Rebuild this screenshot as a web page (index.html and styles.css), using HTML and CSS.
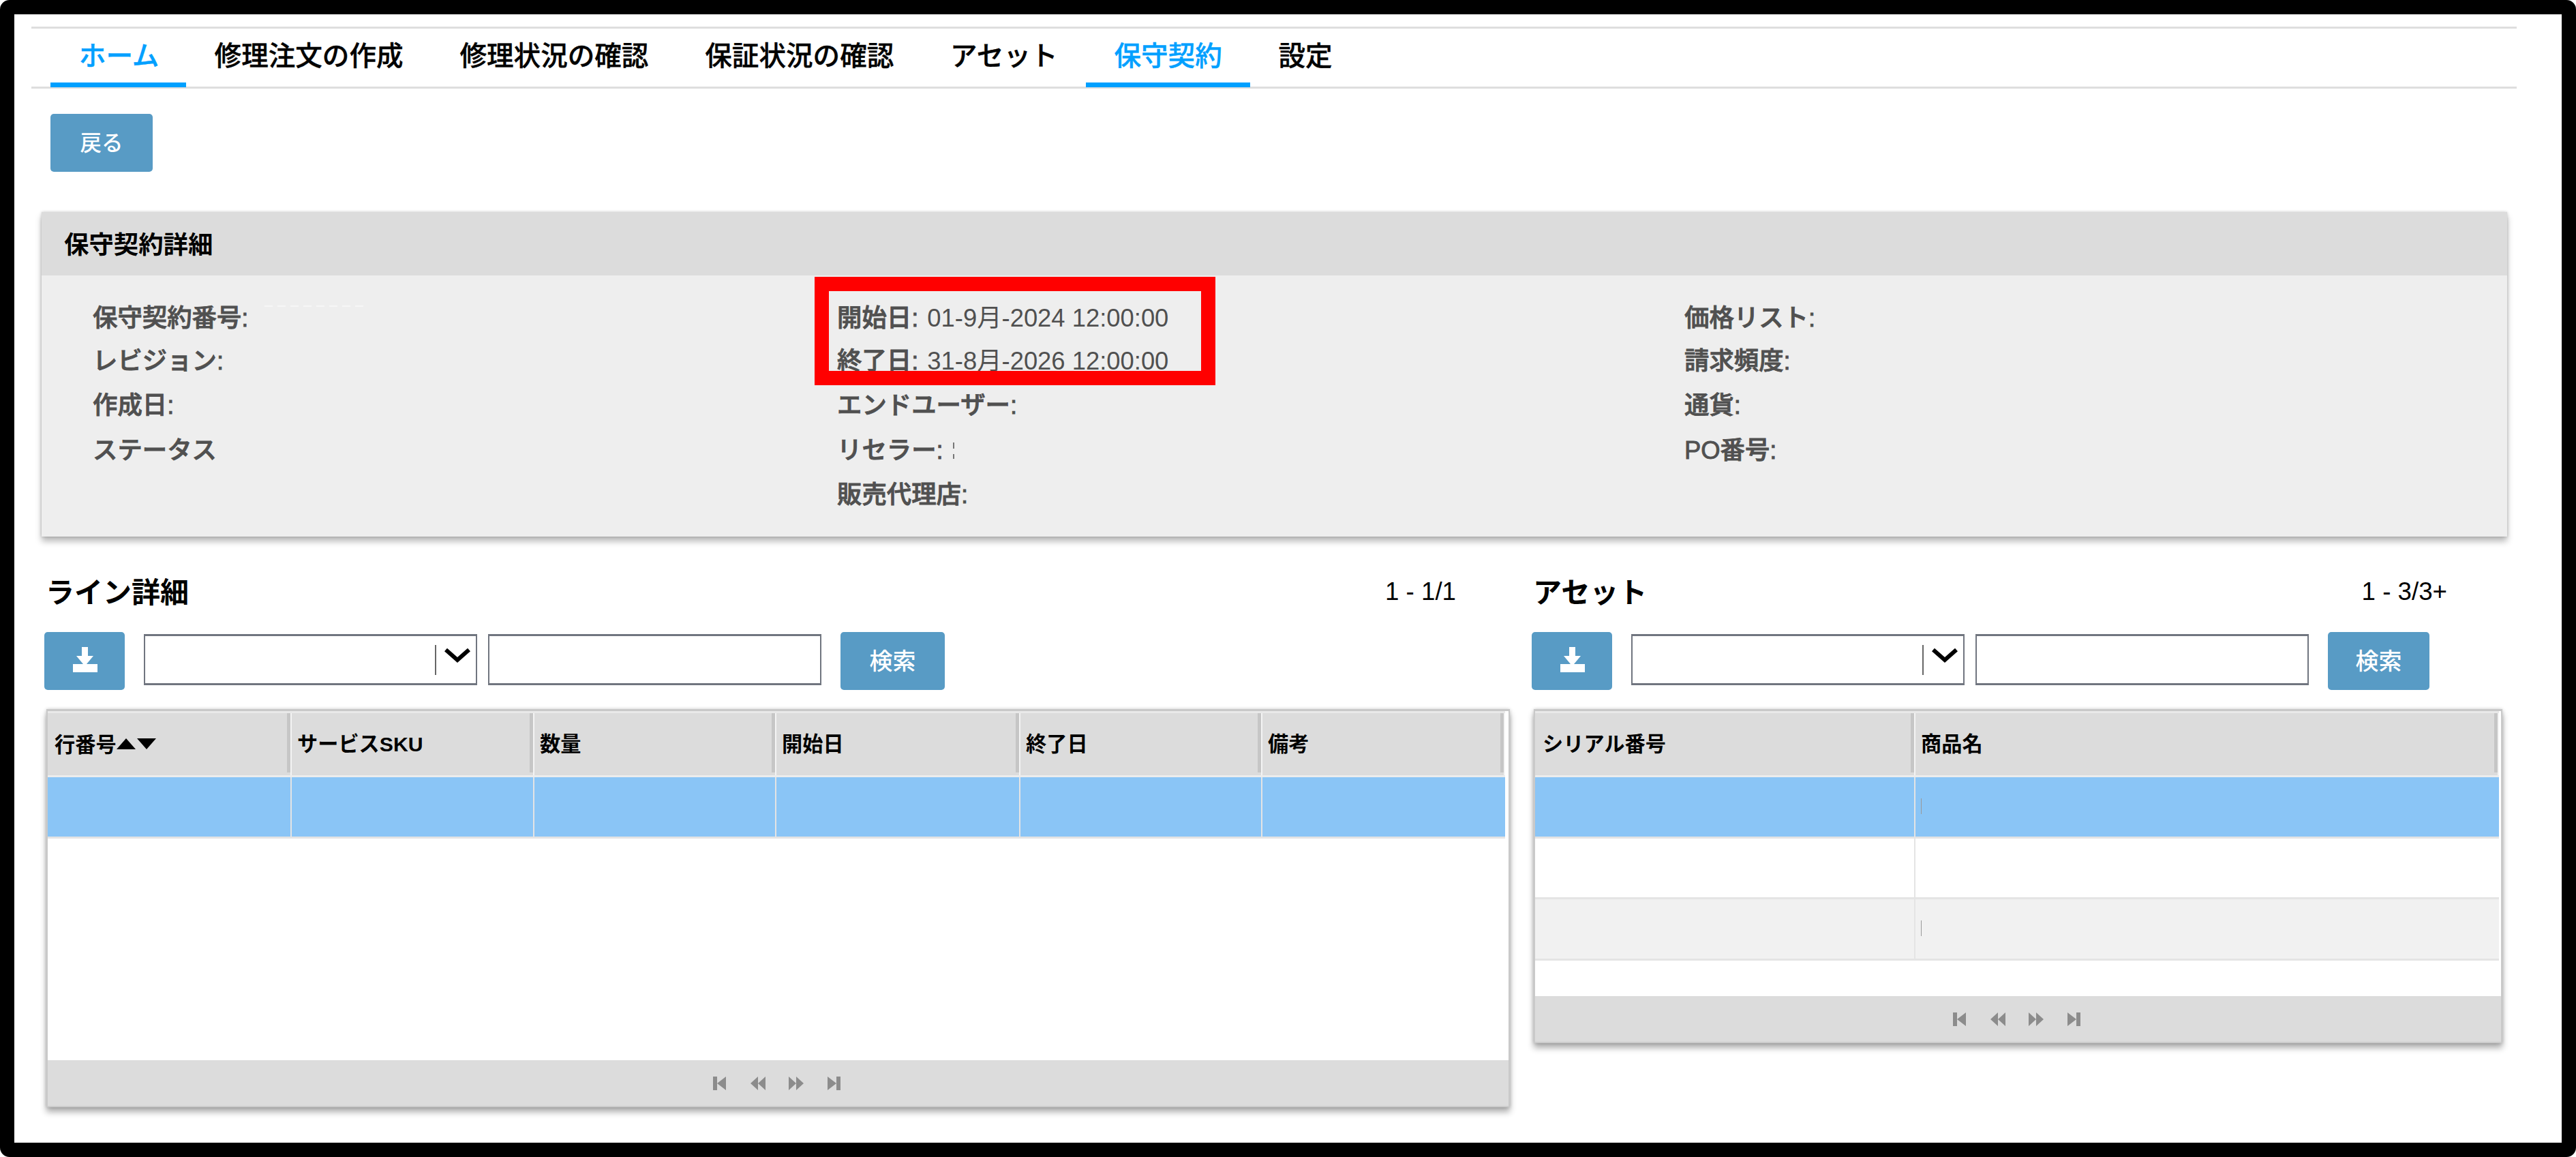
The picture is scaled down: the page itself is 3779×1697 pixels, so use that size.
FILE: index.html
```html
<!DOCTYPE html>
<html lang="ja">
<head>
<meta charset="utf-8">
<title>保守契約詳細</title>
<link rel="stylesheet" href="styles.css">
</head>
<body>
<svg class="defs" width="0" height="0">
  <symbol id="download" viewBox="0 0 38 38"><path d="M14 0h9v13h8L21 25h16v12H1V25h15L6 13h8z"/></symbol>
  <symbol id="first" viewBox="0 0 22 20"><path d="M1 0h6v20H1zM20 0v20L7 10z"/></symbol>
  <symbol id="prev" viewBox="0 0 22 20"><path d="M11 0v20L0 10zM22 0v20L11 10z"/></symbol>
  <symbol id="next" viewBox="0 0 22 20"><path d="M0 0l11 10L0 20zM11 0l11 10-11 10z"/></symbol>
  <symbol id="last" viewBox="0 0 22 20"><path d="M1 0l13 10L1 20zM14 0h6v20h-6z"/></symbol>
</svg>
<div class="frame">
  <nav class="tabs">
    <a class="tab tab-home active">ホーム</a>
    <a class="tab">修理注文の作成</a>
    <a class="tab">修理状況の確認</a>
    <a class="tab">保証状況の確認</a>
    <a class="tab">アセット</a>
    <a class="tab active">保守契約</a>
    <a class="tab">設定</a>
  </nav>
  <button class="btn back">戻る</button>

  <section class="panel">
    <h2 class="panel-title">保守契約詳細</h2>
    <div class="panel-body">
      <div class="col">
        <div class="field"><b>保守契約番号:</b><i class="erased"></i></div>
        <div class="field"><b>レビジョン:</b></div>
        <div class="field"><b>作成日:</b></div>
        <div class="field"><b>ステータス</b></div>
      </div>
      <div class="col">
        <div class="field"><b>開始日:</b><span>01-9月-2024 12:00:00</span></div>
        <div class="field"><b>終了日:</b><span>31-8月-2026 12:00:00</span></div>
        <div class="field"><b>エンドユーザー:</b></div>
        <div class="field"><b>リセラー:</b><i class="remnant"></i></div>
        <div class="field"><b>販売代理店:</b></div>
        <div class="highlight"></div>
      </div>
      <div class="col">
        <div class="field"><b>価格リスト:</b></div>
        <div class="field"><b>請求頻度:</b></div>
        <div class="field"><b>通貨:</b></div>
        <div class="field"><b>PO番号:</b></div>
      </div>
    </div>
  </section>

  <div class="lists">
    <section class="list lines">
      <div class="list-head"><h3>ライン詳細</h3><span class="count">1 - 1/1</span></div>
      <div class="toolbar">
        <button class="btn download"><svg><use href="#download"/></svg></button>
        <div class="select"><i class="bar"></i><svg class="chev" viewBox="0 0 40 22"><path d="M3 2l17 15L37 2"/></svg></div>
        <div class="input"></div>
        <button class="btn search">検索</button>
      </div>
      <div class="table">
        <div class="row head">
          <div class="th sorted">行番号<svg class="sort" viewBox="0 0 60 20"><path d="M1 18L15 2l14 16zM31 2h28L45 18z"/></svg></div><div class="th">サービスSKU</div><div class="th">数量</div><div class="th">開始日</div><div class="th">終了日</div><div class="th">備考</div>
        </div>
        <div class="row selected"><div></div><div></div><div></div><div></div><div></div><div></div></div>
        <div class="blank"></div>
        <div class="pager"><svg><use href="#first"/></svg><svg><use href="#prev"/></svg><svg><use href="#next"/></svg><svg><use href="#last"/></svg></div>
      </div>
    </section>
    <section class="list assets">
      <div class="list-head"><h3>アセット</h3><span class="count">1 - 3/3+</span></div>
      <div class="toolbar">
        <button class="btn download"><svg><use href="#download"/></svg></button>
        <div class="select"><i class="bar"></i><svg class="chev" viewBox="0 0 40 22"><path d="M3 2l17 15L37 2"/></svg></div>
        <div class="input"></div>
        <button class="btn search">検索</button>
      </div>
      <div class="table">
        <div class="row head"><div class="th">シリアル番号</div><div class="th">商品名</div></div>
        <div class="row selected"><div></div><div class="mark"></div></div>
        <div class="row"><div></div><div></div></div>
        <div class="row odd"><div></div><div class="mark"></div></div>
        <div class="blank"></div>
        <div class="pager"><svg><use href="#first"/></svg><svg><use href="#prev"/></svg><svg><use href="#next"/></svg><svg><use href="#last"/></svg></div>
      </div>
    </section>
  </div>
</div>
</body>
</html>
```

FILE: styles.css
```css
* { box-sizing: border-box; }
body {
  margin: 0;
  background: #fff;
  color: #000;
  font-family: "Liberation Sans", "Noto Sans CJK JP", sans-serif;
}
.defs { position: absolute; }
h2, h3 { margin: 0; }
.frame {
  width: 3779px;
  height: 1697px;
  border: 21px solid #000;
  border-radius: 14px;
  padding: 18px 0 0 25px;
  overflow: hidden;
}

/* navigation */
.tabs {
  display: flex;
  width: 3646px;
  height: 91px;
  padding-left: 28px;
  border-top: 3px solid #dedede;
  border-bottom: 3px solid #dedede;
}
.tab {
  height: 86px;
  padding: 0 41.4px;
  font-size: 39.6px;
  font-weight: 500;
  line-height: 80px;
  white-space: nowrap;
  -webkit-text-stroke: .4px currentColor;
}
.tab-home { padding: 0 39.8px 0 41.8px; }
.tab.active {
  height: 86px;
  border-bottom: 7px solid #00a0ff;
  color: #00a0ff;
}

.btn {
  display: flex;
  align-items: center;
  justify-content: center;
  flex: none;
  height: 85px;
  padding: 0 0 5px;
  border: 0;
  border-radius: 5px;
  background: #589bc5;
  color: #fff;
  font: 500 34px "Liberation Sans", "Noto Sans CJK JP", sans-serif;
}
.back { width: 150px; margin: 37px 0 0 28px; font-size: 31.5px; }

/* contract details */
.panel {
  width: 3617px;
  height: 476px;
  margin: 59px 0 0 15px;
  background: #eee;
  box-shadow: 0 7px 9px rgba(0, 0, 0, .28), 0 0 4px rgba(0, 0, 0, .2);
}
.panel-title {
  height: 93px;
  padding-left: 33px;
  background: #dcdcdc;
  font-size: 36.4px;
  font-weight: 700;
  line-height: 98px;
}
.panel-body {
  display: grid;
  grid-template-columns: 1092px 1243px 1fr;
  padding: 30px 0 0 75px;
}
.col { position: relative; }
.field {
  display: flex;
  height: 65.3px;
  color: #505050;
  font-size: 36.4px;
  line-height: 65px;
  white-space: nowrap;
}
.field:first-child { height: 63px; }
.field b { font-weight: 500; -webkit-text-stroke: .9px currentColor; }
.field span { margin-left: 13px; }
.remnant {
  width: 2px;
  height: 24px;
  margin: 21px 0 0 14px;
  background: linear-gradient(#777 0 9px, transparent 9px 17px, #777 17px);
}
.erased {
  width: 147px;
  height: 2px;
  margin: 14px 0 0 24px;
  background: repeating-linear-gradient(90deg, #f6f6f6 0 12px, transparent 12px 19px);
}
.highlight {
  position: absolute;
  left: -33px;
  top: -28px;
  width: 588px;
  height: 159px;
  border: 21px solid #f00;
}

/* lists */
.lists { display: flex; align-items: flex-start; padding: 47px 0 0 19px; }
.lines { width: 2182px; }
.assets { width: 1424px; }
.list-head {
  display: flex;
  justify-content: space-between;
  height: 93px;
  padding-left: 2px;
  line-height: 68px;
}
.list-head h3 { font-size: 42px; font-weight: 700; line-height: 72px; }
.count { font-size: 36.7px; }
.lines .count { margin-right: 111px; }
.assets .count { margin-right: 81px; }
.toolbar { display: flex; }
.download { width: 118px; margin-right: 28px; padding: 0 0 3px 2px; }
.download svg { width: 38px; height: 38px; fill: #fff; }
.select, .input {
  flex: none;
  width: 489px;
  height: 75px;
  margin-top: 3px;
  border: 2px solid #70757f;
  border-width: 3px 2px;
  background: #fff;
}
.select {
  display: flex;
  justify-content: flex-end;
  margin-right: 16px;
  padding: 13px 7px 0 0;
}
.bar { width: 2px; height: 44px; margin-right: 11px; background: #666; }
.chev { width: 40px; height: 22px; margin-top: 5px; fill: none; stroke: #000; stroke-width: 6; }
.search { width: 153px; margin-left: 28px; }
.assets .search { width: 149px; }

.table {
  margin-top: 28px;
  border: 2px solid #c9c9c9;
  border-top-width: 3px;
  border-bottom: 0;
  background: #fff;
  box-shadow: 0 7px 9px rgba(0, 0, 0, .32), 0 0 5px rgba(0, 0, 0, .18);
}
.lines .table { width: 2147px; margin-left: 3px; }
.assets .table { width: 1421px; margin-left: 3px; }
.row { display: grid; height: 89.5px; border-bottom: 3px solid #e4e4e4; }
.lines .row { width: 2138px; grid-template-columns: 358px 356px 355px 358px 355px 1fr; }
.assets .row { width: 1414px; grid-template-columns: 558px 1fr; }
.row > div { border-right: 2px solid #e4e4e4; }
.row > div:last-child { border-right: 0; }
.row.head { height: 97px; padding-top: 3px; background: #e9e9e9; border-color: #ececec; }
.row .th {
  display: flex;
  align-items: center;
  padding: 0 0 6px 8px;
  border-right: 2px solid #f4f4f4;
  background: linear-gradient(#c6c6c6, #c6c6c6) top right / 5px 87px no-repeat #dcdcdc;
  font-size: 30.2px;
  font-weight: 700;
}
.row .th:last-child { border-right: 2px solid #f4f4f4; }
.row .sorted { padding: 0 0 3px 10px; }
.assets .th:first-child { padding-left: 11px; }
.sort { width: 60px; height: 20px; margin: 2px 0 0 -1px; }
.row.selected { background: #8ac5f6; }
.row.odd { background: #f1f1f1; }
.mark { background: linear-gradient(#999, #999) 8px 31px / 1px 23px no-repeat; }
.lines .blank { height: 325.5px; }
.assets .blank { height: 52.5px; }
.pager {
  display: flex;
  align-items: center;
  justify-content: center;
  gap: 34px;
  height: 69px;
  padding-right: 4px;
  background: #dcdcdc;
  border-bottom: 2px solid #ccc;
}
.pager svg { width: 22px; height: 20px; fill: #8c8c8c; }
```
